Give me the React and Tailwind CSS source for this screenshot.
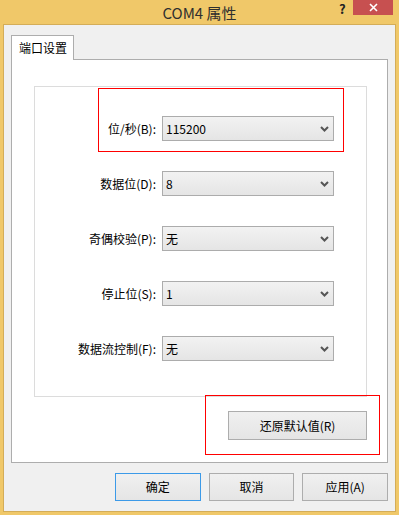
import React from "react";

const rows = [
  { label: "位/秒(B):", value: "115200" },
  { label: "数据位(D):", value: "8" },
  { label: "奇偶校验(P):", value: "无" },
  { label: "停止位(S):", value: "1" },
  { label: "数据流控制(F):", value: "无" },
];

function Chevron() {
  return (
    <svg width="9" height="6" viewBox="0 0 9 6" className="shrink-0">
      <path d="M1 1 L4.5 4.5 L8 1" fill="none" stroke="#555" strokeWidth="2" />
    </svg>
  );
}

function Select({ value }) {
  return (
    <div className="flex h-[25px] w-[172px] items-center justify-between border border-[#acacac] bg-gradient-to-b from-[#f2f2f2] to-[#e5e5e5] pl-[3px] pr-[4px] text-[12px] leading-none text-black">
      <span>{value}</span>
      <Chevron />
    </div>
  );
}

function Button({ children, primary, className = "" }) {
  return (
    <div
      className={
        "flex items-center justify-center border bg-gradient-to-b from-[#f0f0f0] to-[#e5e5e5] text-[12px] leading-none text-black " +
        (primary ? "border-[#3c9ae8] " : "border-[#adadad] ") +
        className
      }
    >
      {children}
    </div>
  );
}

export default function App() {
  return (
    <div className="relative flex h-[515px] w-[399px] flex-col bg-[#f0c869] px-[3px] pb-[3px] font-['Noto_Sans_CJK_SC',sans-serif]">
      {/* title bar */}
      <div className="relative flex h-[24px] shrink-0 items-center justify-center">
        <span className="text-[15px] leading-none text-[#2f2f2f]">COM4 属性</span>
        <span className="absolute left-[336px] top-0 h-[17px] text-[13px] font-bold leading-[17px] text-[#222]">?</span>
        <div className="absolute left-[350px] top-0 flex h-[15px] w-[40px] items-center justify-center bg-[#c75050]">
          <svg width="9" height="9" viewBox="0 0 9 9">
            <path d="M1 1 L8 8 M8 1 L1 8" stroke="#fff" strokeWidth="1.6" />
          </svg>
        </div>
      </div>

      {/* body */}
      <div className="flex flex-1 flex-col border border-[#d4ad58] bg-[#f0f0f0] px-[7px] pt-[10px]">
        <div className="relative z-10 -mb-px flex h-[25px] w-[63px] items-center border-l border-r border-t border-[#adadad] bg-white pl-[7px] text-[12px] leading-none text-black">
          端口设置
        </div>
        <div className="flex h-[404px] w-[377px] flex-col border border-[#adadad] bg-white">
          <div className="ml-[22px] mt-[26px] flex h-[311px] w-[333px] flex-col gap-[30px] border border-[#dcdcdc] pt-[29px]">
            {rows.map((r) => (
              <div key={r.label} className="flex items-center">
                <span className="w-[121px] text-right text-[12px] leading-none text-black">{r.label}</span>
                <div className="ml-[6px]">
                  <Select value={r.value} />
                </div>
              </div>
            ))}
          </div>
          <div className="ml-[22px] mt-[14px] flex w-[333px] justify-end">
            <Button className="h-[29px] w-[139px]">还原默认值(R)</Button>
          </div>
        </div>

        <div className="mt-[10px] flex gap-[8px] pl-[104px]">
          <Button primary className="h-[28px] w-[86px]">确定</Button>
          <Button className="h-[28px] w-[86px]">取消</Button>
          <Button className="h-[28px] w-[86px]">应用(A)</Button>
        </div>
      </div>

      {/* annotation boxes */}
      <div className="pointer-events-none absolute left-[98px] top-[88px] h-[64px] w-[246px] border border-[#ff0000]" />
      <div className="pointer-events-none absolute left-[205px] top-[395px] h-[60px] w-[175px] border border-[#ff0000]" />
    </div>
  );
}
